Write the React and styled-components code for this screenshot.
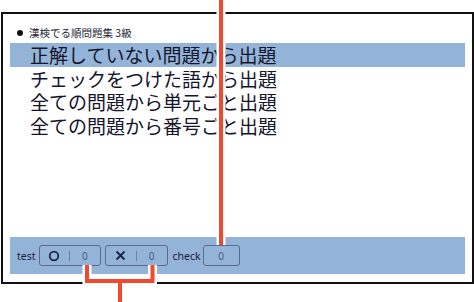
import React from "react";
import styled, { createGlobalStyle } from "styled-components";

const GlobalStyle = createGlobalStyle`
  html, body {
    margin: 0;
    padding: 0;
    background: #ffffff;
  }
  body {
    width: 474px;
    height: 302px;
    overflow: hidden;
    position: relative;
    font-family: "Noto Sans", "Noto Sans CJK JP", sans-serif;
  }
`;

const Frame = styled.div`
  box-sizing: border-box;
  margin: 12px 0 0 1px;
  width: 473px;
  height: 272px;
  border: 2px solid #111111;
  padding: 12px 7px 8px 7px;
  display: flex;
  flex-direction: column;
`;

const Heading = styled.div`
  display: flex;
  align-items: center;
  height: 14px;
  padding-left: 7px;
  font-family: "Noto Sans CJK JP", sans-serif;
  font-size: 10.5px;
  line-height: 1;
  color: #1c1c30;
`;

const Bullet = styled.span`
  width: 6px;
  height: 6px;
  border-radius: 50%;
  background: #111111;
  margin-right: 6px;
`;

const MenuList = styled.ul`
  list-style: none;
  margin: 3px 0 0;
  padding: 0;
`;

const MenuItem = styled.li`
  height: 23.5px;
  display: flex;
  align-items: center;
  line-height: 1;
  padding-left: 20px;
  font-family: "Noto Sans CJK JP", sans-serif;
  font-size: 19px;
  color: #14142a;
  background: ${(p) => (p.$active ? "#93b4d8" : "transparent")};
`;

const Bar = styled.div`
  margin-top: auto;
  height: 37px;
  background: #93b4d8;
  display: flex;
  align-items: center;
  padding-left: 7px;
`;

const Label = styled.span`
  font-size: 10.5px;
  color: #1c2040;
  margin-right: ${(p) => p.$gap}px;
`;

const Counter = styled.div`
  box-sizing: border-box;
  height: 21px;
  width: ${(p) => p.$width}px;
  margin-right: ${(p) => p.$gap || 0}px;
  border: 1px solid #5b6b8c;
  border-radius: 3px;
  display: flex;
  align-items: center;
`;

const Cell = styled.div`
  flex: 1;
  height: 100%;
  display: flex;
  align-items: center;
  justify-content: center;
  font-size: 10px;
  color: #4d5b82;
`;

const Divider = styled.span`
  width: 1px;
  height: 10px;
  background: #6f7f9c;
`;

const Overlay = styled.svg`
  position: absolute;
  left: 0;
  top: 0;
  pointer-events: none;
`;

const items = [
  "正解していない問題から出題",
  "チェックをつけた語から出題",
  "全ての問題から単元ごと出題",
  "全ての問題から番号ごと出題",
];

const Circle = () => (
  <svg width="12" height="12" viewBox="0 0 12 12">
    <circle cx="6" cy="6" r="4.3" fill="none" stroke="#1c2446" strokeWidth="1.8" />
  </svg>
);

const Cross = () => (
  <svg width="11" height="11" viewBox="0 0 11 11">
    <path d="M1.5 1.5 L9.5 9.5 M9.5 1.5 L1.5 9.5" stroke="#1c2446" strokeWidth="1.8" />
  </svg>
);

const Callouts = () => {
  const paths = [
    "M221 0 V245",
    "M87 265 V281 H152.5 V265",
    "M120 281 V302",
  ];
  return (
    <Overlay width="474" height="302" viewBox="0 0 474 302">
      {paths.map((d) => (
        <path key={"w" + d} d={d} fill="none" stroke="#ffffff" strokeWidth="9" />
      ))}
      {paths.map((d) => (
        <path key={"r" + d} d={d} fill="none" stroke="#f1492f" strokeWidth="4" />
      ))}
    </Overlay>
  );
};

const App = () => {
  return (
    <>
      <GlobalStyle />
      <Frame>
        <Heading>
          <Bullet />
          漢検でる順問題集 3級
        </Heading>
        <MenuList>
          {items.map((text, i) => (
            <MenuItem key={text} $active={i === 0}>
              {text}
            </MenuItem>
          ))}
        </MenuList>
        <Bar>
          <Label $gap={3}>test</Label>
          <Counter $width={62} $gap={4}>
            <Cell>
              <Circle />
            </Cell>
            <Divider />
            <Cell>0</Cell>
          </Counter>
          <Counter $width={63} $gap={5}>
            <Cell>
              <Cross />
            </Cell>
            <Divider />
            <Cell>0</Cell>
          </Counter>
          <Label $gap={2}>check</Label>
          <Counter $width={37}>
            <Cell>0</Cell>
          </Counter>
        </Bar>
      </Frame>
      <Callouts />
    </>
  );
};

export default App;
